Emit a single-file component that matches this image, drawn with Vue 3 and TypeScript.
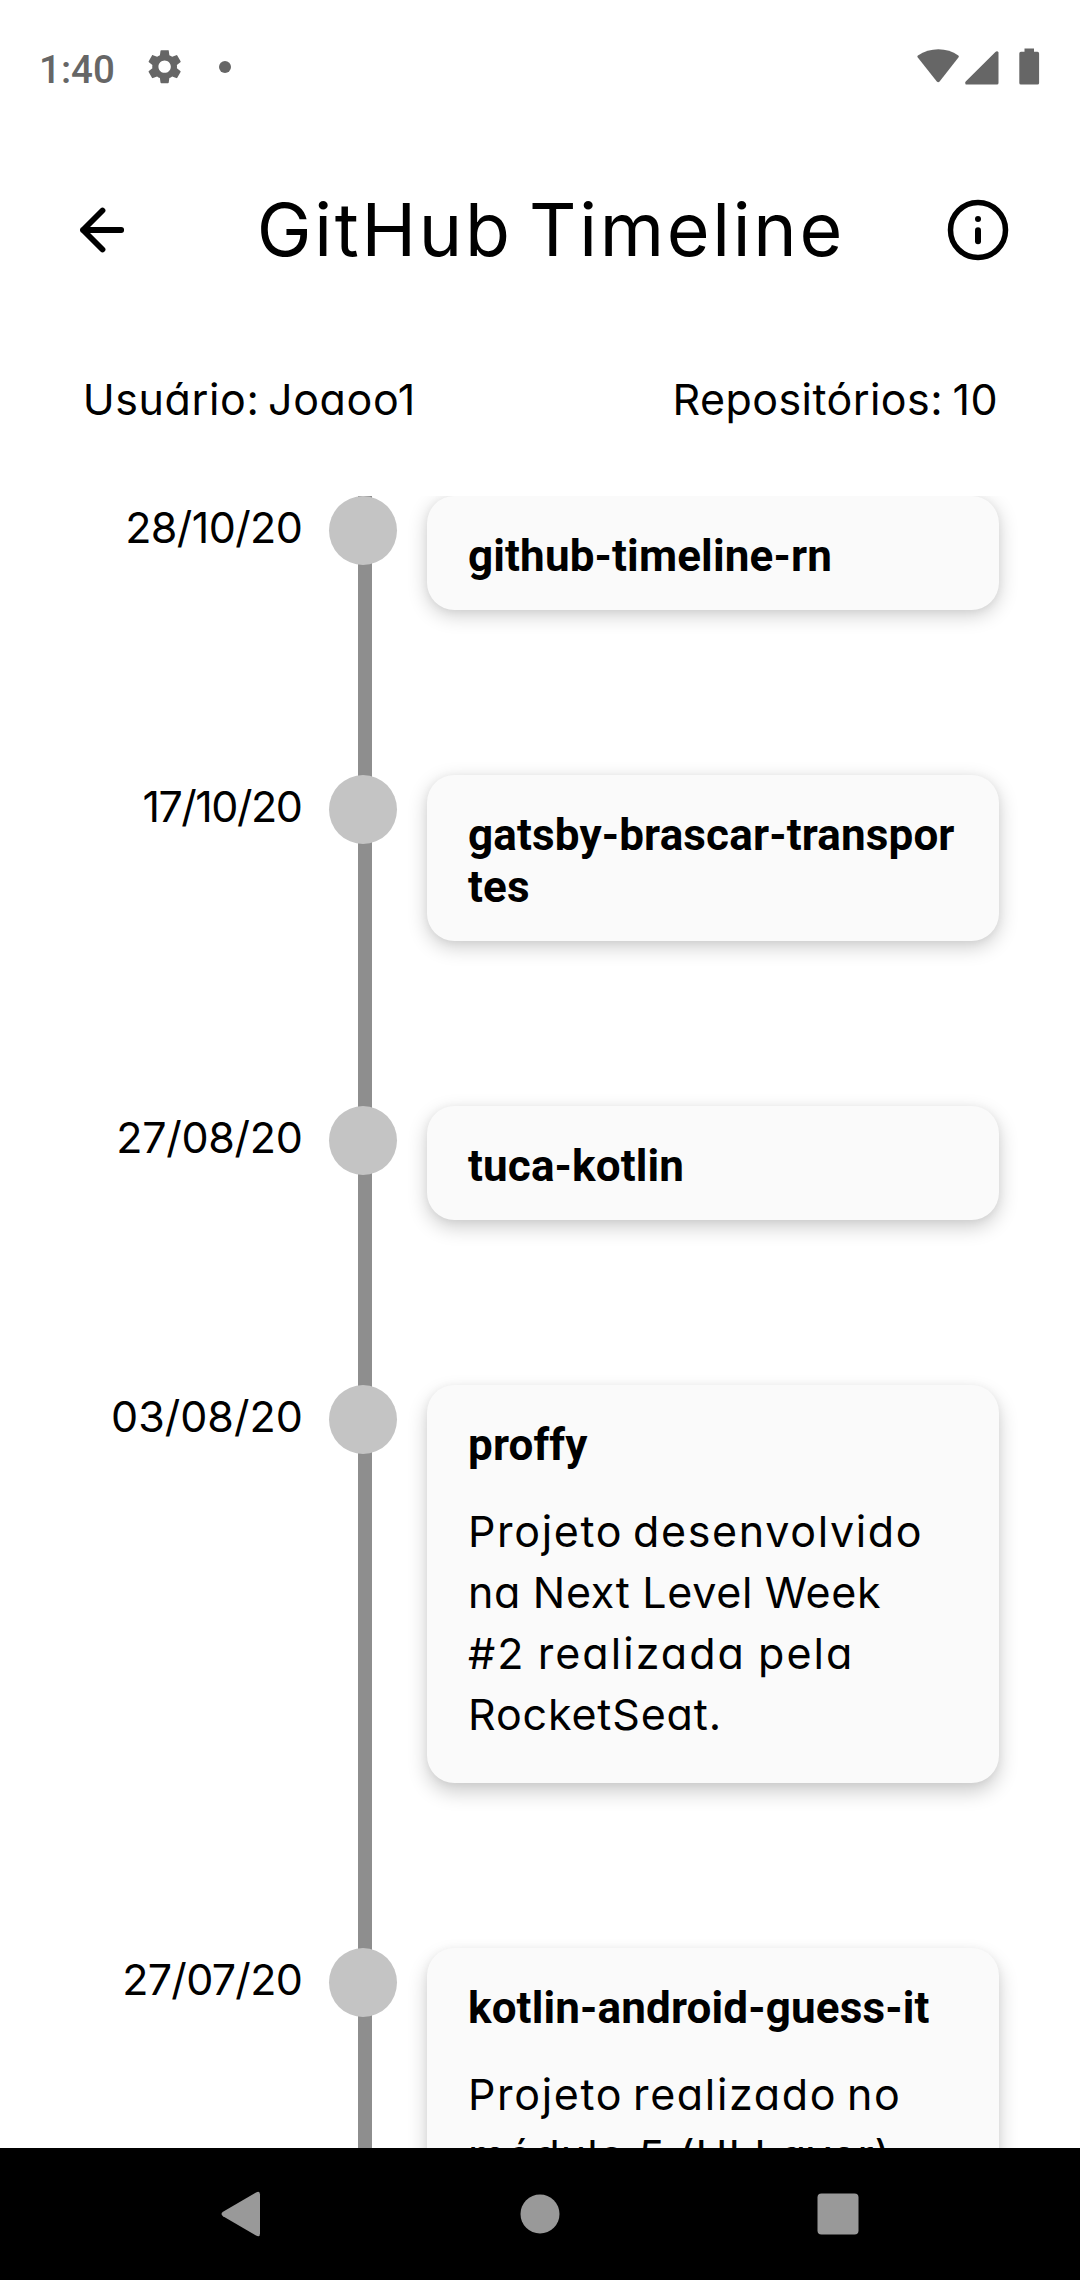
<script setup lang="ts">
interface Line {
  text: string
  spacing: number
  gap?: number
}

interface Repo {
  date: string
  dateSpacing: number
  title: string[]
  description: Line[]
  lift: number
}

const repos: Repo[] = [
  { date: '28/10/20', dateSpacing: -0.6, title: ['github-timeline-rn'], description: [], lift: 5 },
  { date: '17/10/20', dateSpacing: -1.5, title: ['gatsby-brascar-transpor', 'tes'], description: [], lift: 6 },
  { date: '27/08/20', dateSpacing: -0.3, title: ['tuca-kotlin'], description: [], lift: 7 },
  {
    date: '03/08/20',
    dateSpacing: 0,
    title: ['proffy'],
    description: [
      { text: 'Projeto desenvolvido', spacing: 1.66, gap: -4 },
      { text: 'na Next Level Week', spacing: 0.68, gap: -1 },
      { text: '#2 realizada pela', spacing: 2.05, gap: -2 },
      { text: 'RocketSeat.', spacing: 0.85 },
    ],
    lift: 9,
  },
  {
    date: '27/07/20',
    dateSpacing: -0.7,
    title: ['kotlin-android-guess-it'],
    description: [
      { text: 'Projeto realizado no', spacing: 1.66, gap: -4 },
      { text: 'módulo 5 (UI Layer)', spacing: 1.02 },
    ],
    lift: 10,
  },
]
</script>

<template>
  <div class="screen">
    <div class="status">
      <span class="clock">1:40</span>
      <svg class="gear" viewBox="0 0 24 24">
        <path d="M19.14 12.94c.04-.3.06-.61.06-.94 0-.32-.02-.64-.07-.94l2.03-1.58a.49.49 0 0 0 .12-.61l-1.92-3.32a.488.488 0 0 0-.59-.22l-2.39.96c-.5-.38-1.03-.7-1.62-.94l-.36-2.54a.484.484 0 0 0-.48-.41h-3.84c-.24 0-.43.17-.47.41l-.36 2.54c-.59.24-1.13.57-1.62.94l-2.39-.96c-.22-.08-.47 0-.59.22L2.74 8.87c-.12.21-.08.47.12.61l2.03 1.58c-.05.3-.09.63-.09.94s.02.64.07.94l-2.03 1.58a.49.49 0 0 0-.12.61l1.92 3.32c.12.22.37.29.59.22l2.39-.96c.5.38 1.03.7 1.62.94l.36 2.54c.05.24.24.41.48.41h3.84c.24 0 .44-.17.47-.41l.36-2.54c.59-.24 1.13-.56 1.62-.94l2.39.96c.22.08.47 0 .59-.22l1.92-3.32c.12-.22.07-.47-.12-.61l-2.01-1.58zM12 15.6c-1.98 0-3.6-1.62-3.6-3.6s1.62-3.6 3.6-3.6 3.6 1.62 3.6 3.6-1.62 3.6-3.6 3.6z" />
      </svg>
      <span class="dot"></span>
      <svg class="signals" viewBox="0 0 124 38">
        <path d="M.6 9.2C.2 8.6.3 7.9.9 7.4 13-.8 30-.8 41.3 7.4C41.9 7.9 42 8.6 41.6 9.2L22.6 33.6Q21.2 35.1 19.8 33.6Z" />
        <path d="M48.7 36.5Q47.5 34.7 48.7 33.6L78.4 3.9Q80.4 2.5 81.5 4.3V35Q81.5 36.5 80 36.5Z" />
        <path d="M107.5 0.5H117V3.8H120.5Q122.1 3.8 122.1 5.4V35Q122.1 36.5 120.5 36.5H103.9Q102.3 36.5 102.3 35V5.4Q102.3 3.8 103.9 3.8H107.5Z" />
      </svg>
    </div>

    <header class="header">
      <svg class="back" viewBox="0 0 48 48">
        <path d="M25.5 4.5L6 24L25.5 43.5M6 24H44.2" />
      </svg>
      <h1>GitHub Timeline</h1>
      <svg class="info" viewBox="0 0 62 62">
        <circle cx="31" cy="31" r="27.5" class="ring" />
        <circle cx="31" cy="20" r="3" />
        <rect x="28" y="28.2" width="6" height="17" rx="3" />
      </svg>
    </header>

    <section class="summary">
      <span class="user">Usuário: Joaoo1</span>
      <span class="count">Repositórios: 10</span>
    </section>

    <main class="timeline">
      <article v-for="repo in repos" :key="repo.date" class="row">
        <div class="date">
          <span :style="{ letterSpacing: repo.dateSpacing + 'px', marginRight: -repo.dateSpacing + 'px' }">{{ repo.date }}</span>
        </div>
        <div class="track">
          <i class="line"></i>
          <i class="node"></i>
        </div>
        <div class="card" :style="{ '--lift': repo.lift + 'px' }">
          <h2><span v-for="part in repo.title" :key="part">{{ part }}</span></h2>
          <p v-if="repo.description.length">
            <span
              v-for="l in repo.description"
              :key="l.text"
              :style="{ letterSpacing: l.spacing + 'px', wordSpacing: (l.gap ?? 0) + 'px' }"
            >{{ l.text }}</span>
          </p>
        </div>
      </article>
    </main>

    <nav class="navbar">
      <svg viewBox="0 0 48 48"><path d="M41 4.5V43.5Q41 47.8 37 45.5L4 26.2Q1 24 4 21.8L37 2.5Q41 .2 41 4.5Z" /></svg>
      <svg viewBox="0 0 48 48"><circle cx="24" cy="24" r="19.5" /></svg>
      <svg viewBox="0 0 48 48"><rect x="3.5" y="3.5" width="41" height="41" rx="4" /></svg>
    </nav>
  </div>
</template>

<style>
body {
  margin: 0;
  background: #fff;
}
</style>

<style scoped>
.screen {
  width: 1080px;
  height: 2280px;
  display: flex;
  flex-direction: column;
  overflow: hidden;
  background: #fff;
  color: #000;
  font: 400 43px/61px Inter, "Open Sans", sans-serif;
  font-feature-settings: "cv11" 1;
}
.status {
  box-sizing: border-box;
  height: 136px;
  padding: 0 39px 2px 39px;
  display: flex;
  align-items: center;
  fill: #666;
}
.clock {
  font: 500 38.5px/46px Roboto, sans-serif;
  color: #666;
  margin-top: 5px;
}
.gear {
  width: 41.25px;
  height: 41.25px;
  margin-left: 29px;
}
.dot {
  width: 12px;
  height: 12px;
  border-radius: 50%;
  background: #666;
  margin-left: 33.5px;
}
.signals {
  width: 124px;
  height: 38px;
  margin-left: auto;
}
.header {
  height: 88px;
  padding: 49px 71px 0 77px;
  display: flex;
  align-items: center;
}
.header h1 {
  margin: 1px auto 0 131.7px;
  font: 400 73.5px/88px Inter, "Open Sans", sans-serif;
  letter-spacing: 2.7px;
  word-spacing: -7px;
  white-space: nowrap;
}
.back {
  width: 48px;
  height: 48px;
  margin-top: 2px;
  fill: none;
  stroke: #000;
  stroke-width: 5.8px;
  stroke-linecap: round;
  stroke-linejoin: round;
}
.info {
  width: 62px;
  height: 62px;
  margin-top: 2px;
}
.ring {
  fill: none;
  stroke: #000;
  stroke-width: 5.5px;
}
.summary {
  display: flex;
  justify-content: space-between;
  padding: 96px 82px 66px 82.7px;
  white-space: nowrap;
}
.user {
  letter-spacing: 0.6px;
  word-spacing: -4px;
}
.count {
  letter-spacing: 0.43px;
  word-spacing: -3px;
}
.timeline {
  flex: 1;
  min-height: 0;
  overflow: hidden;
}
.row {
  display: flex;
}
.date {
  width: 302.8px;
  padding-top: 1px;
  text-align: right;
}
.track {
  display: grid;
  width: 68px;
  margin-left: 26.2px;
}
.line,
.node {
  grid-area: 1 / 1;
}
.line {
  width: 14px;
  margin-left: 29px;
  background: #8e8e8e;
}
.node {
  width: 68px;
  height: 69px;
  border-radius: 50%;
  background: #c4c4c4;
}
.card {
  box-sizing: border-box;
  width: 572px;
  margin: 0 0 165px 30px;
  padding: 34px 40px 28px 41px;
  border-radius: 27.5px;
  background: #fafafa;
  box-shadow: 0 var(--lift) 20px rgba(0, 0, 0, 0.2), 0 1px 8px rgba(0, 0, 0, 0.05);
}
.card h2 {
  margin: 0;
  font: 700 44px/52px Roboto, sans-serif;
  letter-spacing: 0.15px;
}
.card h2 span,
.card p span {
  display: block;
  white-space: nowrap;
}
.card p {
  margin: 30px 0 10px;
}
.navbar {
  height: 132px;
  flex: none;
  display: flex;
  justify-content: center;
  align-items: center;
  gap: 249.5px;
  background: #000;
  fill: #999;
}
.navbar svg {
  width: 48px;
  height: 48px;
}
</style>
